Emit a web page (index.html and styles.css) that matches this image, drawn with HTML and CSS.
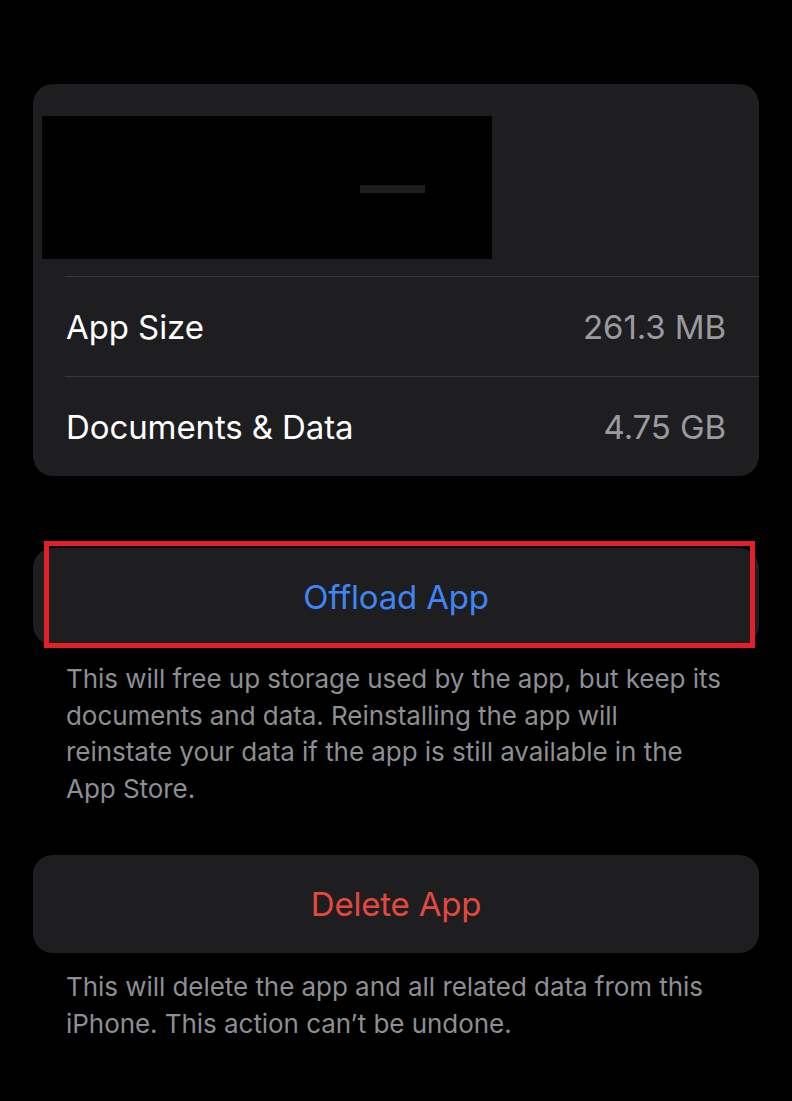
FILE: index.html
```html
<!DOCTYPE html>
<html lang="en">
<head>
<meta charset="utf-8">
<title>App Storage</title>
<link rel="stylesheet" href="styles.css">
</head>
<body>
<main class="page">
  <section class="card info-card">
    <div class="app-header">
      <div class="redacted"><span class="redacted-bar"></span></div>
    </div>
    <div class="row">
      <span class="label">App Size</span>
      <span class="value">261.3 MB</span>
    </div>
    <div class="row">
      <span class="label">Documents &amp; Data</span>
      <span class="value">4.75 GB</span>
    </div>
  </section>

  <section class="action-group offload-group">
    <div class="card action">
      <span class="action-label blue">Offload App</span>
    </div>
    <div class="highlight"></div>
  </section>
  <p class="footnote">This will free up storage used by the app, but keep its<br>documents and data. Reinstalling the app will<br>reinstate your data if the app is still available in the<br>App Store.</p>

  <section class="action-group delete-group">
    <div class="card action">
      <span class="action-label red">Delete App</span>
    </div>
  </section>
  <p class="footnote">This will delete the app and all related data from this<br>iPhone. This action can’t be undone.</p>
</main>
</body>
</html>
```

FILE: styles.css
```css
html, body {
  margin: 0;
  padding: 0;
  background: #000;
}
body {
  font-family: Inter, "Noto Sans", "Liberation Sans", sans-serif;
  color: #fff;
  width: 792px;
  height: 1101px;
  overflow: hidden;
}
.page {
  padding: 84px 33px 0 33px;
  display: flex;
  flex-direction: column;
}
.card {
  background: #1e1e20;
  border-radius: 20px;
}
.info-card {
  height: 392px;
  display: flex;
  flex-direction: column;
  overflow: hidden;
}
.app-header {
  height: 192px;
  padding: 32px 0 0 9px;
  box-sizing: border-box;
}
.redacted {
  width: 450px;
  height: 143px;
  background: #000;
  position: relative;
}
.redacted-bar {
  position: absolute;
  left: 318px;
  top: 69px;
  width: 65px;
  height: 8px;
  background: #1e1e20;
}
.row {
  flex: 1;
  display: flex;
  align-items: center;
  justify-content: space-between;
  padding: 0 33px;
  font-size: 33px;
  letter-spacing: -0.1px;
  border-top: 1px solid #38383a;
  margin-left: 32px;
  padding-left: 1px;
}
.label {
  color: #fff;
}
.value {
  color: #9a9a9f;
}
.action-group {
  position: relative;
}
.offload-group {
  margin-top: 72px;
}
.delete-group {
  margin-top: 48px;
}
.action {
  height: 97px;
  display: flex;
  align-items: center;
  justify-content: center;
}
.delete-group .action {
  height: 98px;
}
.action-label {
  font-size: 33px;
  letter-spacing: -0.2px;
}
.blue {
  color: #3e85f5;
}
.red {
  color: #e5483f;
}
.highlight {
  position: absolute;
  left: 11px;
  top: -7px;
  width: 711px;
  height: 107px;
  box-sizing: border-box;
  border: 5px solid #e3202a;
}
.footnote {
  margin: 16px 0 0 0;
  padding-left: 33px;
  color: #8e8e93;
  font-size: 26px;
  line-height: 36.5px;
  letter-spacing: -0.05px;
}
```
